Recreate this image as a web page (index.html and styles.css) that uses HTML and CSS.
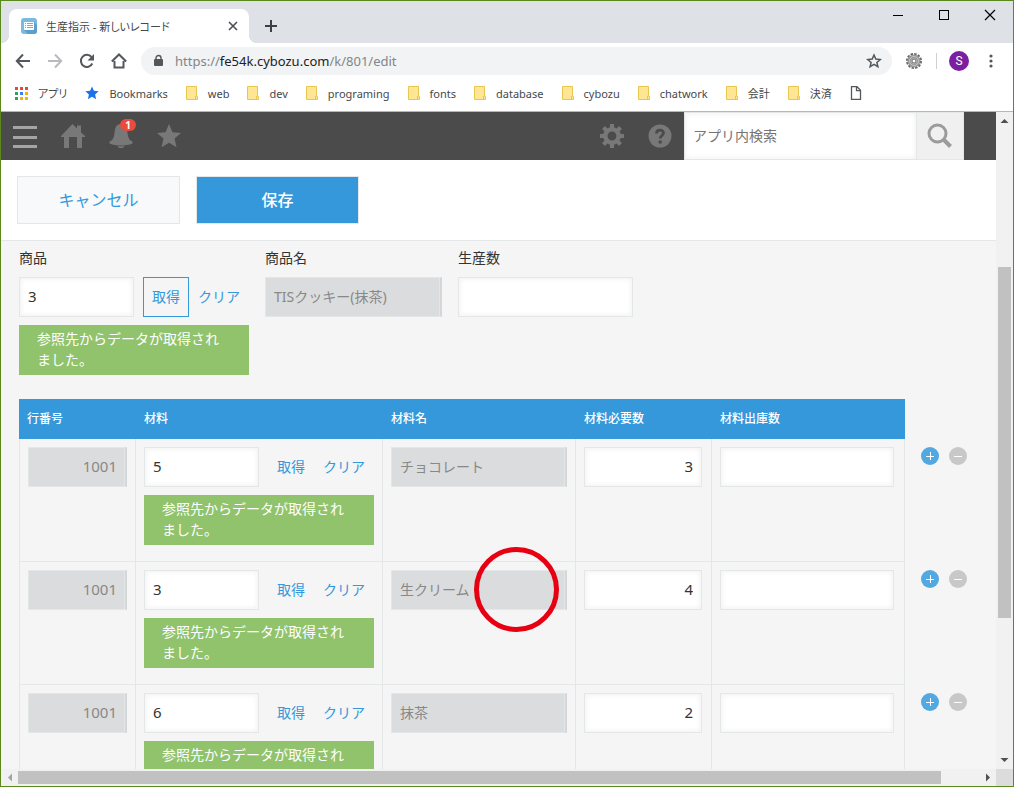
FILE: index.html
```html
<!DOCTYPE html>
<html lang="ja">
<head>
    <meta charset="UTF-8">
    <meta name="viewport" content="width=device-width, initial-scale=1.0">
    <title>生産指示 - 新しいレコード</title>
    <link rel="stylesheet" href="styles.css">
</head>
<body>
    <div class="browser">
        <div class="tab-strip">
            <div class="tab">
                <svg class="favicon" width="16" height="16" viewBox="0 0 16 16">
                    <rect width="16" height="16" rx="3" fill="#7ab9e0"/>
                    <path d="M13 4l3 3v6a3 3 0 0 1-3 3H7l-4-4z" fill="#5c9fcb"/>
                    <rect x="3" y="4" width="10" height="8" rx="1" fill="#fff"/>
                    <path d="M4 5.500h1M6 5.500h6M4 7.500h1M6 7.500h6M4 9.500h1M6 9.500h6" stroke="#6aaeda"/>
                </svg>
                <span class="tab-title">生産指示 - 新しいレコード</span>
                <button class="plain" aria-label="タブを閉じる">
                    <svg width="16" height="16" viewBox="0 0 16 16"><path d="M4 4l8 8M12 4l-8 8" stroke="#4a4d51" stroke-width="1.600"/></svg>
                </button>
            </div>
            <button class="plain new-tab" aria-label="新しいタブ">
                <svg width="16" height="16" viewBox="0 0 16 16"><path d="M8 2v12M2 8h12" stroke="#3c4043" stroke-width="2"/></svg>
            </button>
            <div class="window-buttons">
                <button class="plain" aria-label="最小化"><svg width="12" height="12" viewBox="0 0 12 12"><path d="M1 6.500h10" stroke="#000"/></svg></button>
                <button class="plain" aria-label="最大化"><svg width="12" height="12" viewBox="0 0 12 12"><rect x="1.500" y="1.500" width="9" height="9" fill="none" stroke="#000"/></svg></button>
                <button class="plain" aria-label="閉じる"><svg width="12" height="12" viewBox="0 0 12 12"><path d="M1 1l10 10M11 1L1 11" stroke="#000" stroke-width="1.200"/></svg></button>
            </div>
        </div>

        <div class="toolbar">
            <div class="nav-buttons">
                <button class="plain" aria-label="戻る"><svg width="16" height="16" viewBox="0 0 16 16"><path d="M15 8H2M8 1.500L1.800 8 8 14.500" fill="none" stroke="#54575b" stroke-width="2"/></svg></button>
                <button class="plain" aria-label="進む"><svg width="16" height="16" viewBox="0 0 16 16"><path d="M1 8h13M8 1.500L14.200 8 8 14.500" fill="none" stroke="#b8babd" stroke-width="2"/></svg></button>
                <button class="plain" aria-label="再読み込み"><svg width="16" height="16" viewBox="0 0 16 16"><path d="M13.300 10.500A6 6 0 1 1 12.500 4" fill="none" stroke="#54575b" stroke-width="2"/><path d="M15 1v6.500H8.500z" fill="#54575b"/></svg></button>
                <button class="plain" aria-label="ホーム"><svg width="16" height="16" viewBox="0 0 16 16"><path d="M3.500 8v6.500h9V8M.8 8.500L8 1.500l7.200 7" fill="none" stroke="#54575b" stroke-width="2"/></svg></button>
            </div>
            <div class="omnibox">
                <svg width="12" height="14" viewBox="0 0 12 14"><rect x="1" y="5" width="9" height="7" rx="1" fill="#54575b"/><path d="M3 5.500V4a2.500 2.500 0 0 1 5 0v1.500" fill="none" stroke="#54575b" stroke-width="1.400"/></svg>
                <div class="url" role="textbox" contenteditable="true" aria-label="アドレス">https://<b>fe54k.cybozu.com</b>/k/801/edit</div>
                <button class="plain" aria-label="ブックマークに追加"><svg width="16" height="16" viewBox="0 0 16 16"><path d="M8 2l1.800 4.100 4.400.4-3.300 2.900 1 4.300L8 11.400l-3.900 2.300 1-4.300-3.300-2.900 4.400-.4z" fill="none" stroke="#54575b" stroke-width="1.500"/></svg></button>
            </div>
            <svg class="extension" width="16" height="16" viewBox="0 0 16 16">
                <circle cx="8" cy="8" r="7" fill="none" stroke="#666" stroke-width="2" stroke-dasharray="2.400 1.265"/>
                <circle cx="8" cy="8" r="4.500" fill="none" stroke="#999" stroke-width="4"/>
                <circle cx="8" cy="8" r="4.500" fill="none" stroke="#c4c4c4"/>
                <circle cx="8" cy="8" r="2" fill="#fff" stroke="#666"/>
            </svg>
            <span class="divider"></span>
            <button class="avatar" aria-label="プロフィール">S</button>
            <button class="plain menu" aria-label="メニュー"><svg width="4" height="16" viewBox="0 0 4 16" fill="#54575b"><circle cx="2" cy="3" r="1.600"/><circle cx="2" cy="8" r="1.600"/><circle cx="2" cy="13" r="1.600"/></svg></button>
        </div>

        <nav class="bookmarks">
            <a href="#"><svg width="13" height="13" viewBox="0 0 13 13"><path d="M0 0h3v3H0zM5 0h3v3H5zM10 0h3v3h-3z" fill="#e8453c"/><path d="M0 5h3v3H0zM0 10h3v3H0z" fill="#2fa35a"/><path d="M5 5h3v3H5z" fill="#3f80ef"/><path d="M10 5h3v3h-3zM5 10h3v3H5zM10 10h3v3h-3z" fill="#f3b10b"/></svg>アプリ</a>
            <a href="#"><svg width="14" height="14" viewBox="0 0 14 14"><path d="M7 .5l1.900 4.300 4.700.5-3.500 3.200 1 4.700L7 10.800l-4.100 2.400 1-4.700L.4 5.300l4.700-.5z" fill="#1a73e8"/></svg>Bookmarks</a>
            <a href="#"><svg class="folder"><use href="#folder"/></svg>web</a>
            <a href="#"><svg class="folder"><use href="#folder"/></svg>dev</a>
            <a href="#"><svg class="folder"><use href="#folder"/></svg>programing</a>
            <a href="#"><svg class="folder"><use href="#folder"/></svg>fonts</a>
            <a href="#"><svg class="folder"><use href="#folder"/></svg>database</a>
            <a href="#"><svg class="folder"><use href="#folder"/></svg>cybozu</a>
            <a href="#"><svg class="folder"><use href="#folder"/></svg>chatwork</a>
            <a href="#"><svg class="folder"><use href="#folder"/></svg>会計</a>
            <a href="#"><svg class="folder"><use href="#folder"/></svg>決済</a>
            <a href="#" aria-label="ページ"><svg width="12" height="14" viewBox="0 0 12 14"><path d="M1.500 .7h5.500l3.500 3.500v9.100h-9zM6.500 .7v4h4" fill="none" stroke="#54575b" stroke-width="1.300"/></svg></a>
        </nav>

        <div class="viewport">
            <div class="page">
                <header class="app-header">
                    <div class="header-icons">
                        <button class="plain" aria-label="メニュー"><svg width="24" height="24" viewBox="0 0 24 24"><path d="M0 3.500h24M0 13.500h24M0 22.500h24" stroke="#a5a5a5" stroke-width="3"/></svg></button>
                        <a href="#" aria-label="ポータル"><svg width="24" height="24" viewBox="0 0 24 24"><path d="M0 12L11.500 0 16 4.500V1.500h4v7L24 12v1h-3v11h-5v-11H8v11H3V13H0z" fill="#787878"/></svg></a>
                        <button class="plain bell" aria-label="通知"><svg width="24" height="24" viewBox="0 0 24 24"><path d="M12 0c5 0 6 4 6.500 9 .5 5 2 7.500 5 8.500v2C20 21 16 21.500 12 21.500S4 21 .5 19.500v-2C3.500 16.500 5 14 5.500 9 6 4 7 0 12 0zM8.500 22.200h7Q14 24.500 12 24.500t-3.500-2.300z" fill="#787878"/></svg><span class="badge">1</span></button>
                        <button class="plain" aria-label="ブックマーク"><svg width="24" height="24" viewBox="0 0 24 24"><path d="M12 0l3.500 8.300 8.500.6-6.500 5.700 2 8.700L12 18.800l-7.500 4.500 2-8.700L0 8.900l8.500-.6z" fill="#787878"/></svg></button>
                    </div>
                    <div class="header-icons">
                        <button class="plain" aria-label="設定"><svg width="24" height="24" viewBox="0 0 24 24"><circle cx="12" cy="12" r="6.700" fill="none" stroke="#787878" stroke-width="4.500"/><path d="M12 0v5M12 19v5M0 12h5M19 12h5M3.500 3.500l3.500 3.500M17 17l3.500 3.500M20.500 3.500L17 7M7 17l-3.500 3.500" stroke="#787878" stroke-width="4"/></svg></button>
                        <button class="plain" aria-label="ヘルプ"><svg width="24" height="24" viewBox="0 0 24 24"><circle cx="12" cy="12" r="11.500" fill="#787878"/><path d="M8.500 9.500C8.500 5 15.500 5 15.500 9c0 2.500-3.300 2.500-3.300 5.500" fill="none" stroke="#4b4b4b" stroke-width="2.800"/><circle cx="12.200" cy="18" r="1.800" fill="#4b4b4b"/></svg></button>
                    </div>
                    <form class="search">
                        <input type="text" placeholder="アプリ内検索" aria-label="アプリ内検索">
                        <button type="button" aria-label="検索"><svg width="26" height="26" viewBox="0 0 26 26"><circle cx="10.500" cy="10.500" r="8.500" fill="none" stroke="#9b9b9b" stroke-width="3"/><path d="M16.500 16.500l7 7" stroke="#9b9b9b" stroke-width="4"/></svg></button>
                    </form>
                </header>

                <div class="actions">
                    <button class="btn">キャンセル</button>
                    <button class="btn btn-save">保存</button>
                </div>

                <main class="record">
                    <div class="fields">
                        <div class="field">
                            <label for="product">商品</label>
                            <div class="lookup">
                                <input id="product" class="w-lookup" type="text" value="3">
                                <button class="get focused">取得</button>
                                <button class="clear">クリア</button>
                            </div>
                            <p class="message">参照先からデータが取得されました。</p>
                        </div>
                        <div class="field">
                            <label for="productName">商品名</label>
                            <input id="productName" class="w-name" type="text" value="TISクッキー(抹茶)" disabled>
                        </div>
                        <div class="field">
                            <label for="quantity">生産数</label>
                            <input id="quantity" class="w-out" type="text">
                        </div>
                    </div>

                    <table class="subtable">
                        <thead>
                            <tr>
                                <th>行番号</th>
                                <th>材料</th>
                                <th class="col-name">材料名</th>
                                <th class="col-need">材料必要数</th>
                                <th class="col-out">材料出庫数</th>
                                <td class="ops"></td>
                            </tr>
                        </thead>
                        <tbody>
                            <tr>
                                <td><input class="w-row num" type="text" value="1001" aria-label="行番号" disabled></td>
                                <td>
                                    <div class="lookup">
                                        <input class="w-lookup" type="text" value="5" aria-label="材料">
                                        <button class="get">取得</button>
                                        <button class="clear">クリア</button>
                                    </div>
                                    <p class="message">参照先からデータが取得されました。</p>
                                </td>
                                <td><input class="w-name" type="text" value="チョコレート" aria-label="材料名" disabled></td>
                                <td><input class="w-need num" type="text" value="3" aria-label="材料必要数"></td>
                                <td><input class="w-out num" type="text" aria-label="材料出庫数"></td>
                                <td class="ops"><div><button class="add" aria-label="行を追加"></button><button class="remove" aria-label="行を削除"></button></div></td>
                            </tr>
                            <tr>
                                <td><input class="w-row num" type="text" value="1001" aria-label="行番号" disabled></td>
                                <td>
                                    <div class="lookup">
                                        <input class="w-lookup" type="text" value="3" aria-label="材料">
                                        <button class="get">取得</button>
                                        <button class="clear">クリア</button>
                                    </div>
                                    <p class="message">参照先からデータが取得されました。</p>
                                </td>
                                <td><div class="marked"><input class="w-name" type="text" value="生クリーム" aria-label="材料名" disabled></div></td>
                                <td><input class="w-need num" type="text" value="4" aria-label="材料必要数"></td>
                                <td><input class="w-out num" type="text" aria-label="材料出庫数"></td>
                                <td class="ops"><div><button class="add" aria-label="行を追加"></button><button class="remove" aria-label="行を削除"></button></div></td>
                            </tr>
                            <tr>
                                <td><input class="w-row num" type="text" value="1001" aria-label="行番号" disabled></td>
                                <td>
                                    <div class="lookup">
                                        <input class="w-lookup" type="text" value="6" aria-label="材料">
                                        <button class="get">取得</button>
                                        <button class="clear">クリア</button>
                                    </div>
                                    <p class="message">参照先からデータが取得されました。</p>
                                </td>
                                <td><input class="w-name" type="text" value="抹茶" aria-label="材料名" disabled></td>
                                <td><input class="w-need num" type="text" value="2" aria-label="材料必要数"></td>
                                <td><input class="w-out num" type="text" aria-label="材料出庫数"></td>
                                <td class="ops"><div><button class="add" aria-label="行を追加"></button><button class="remove" aria-label="行を削除"></button></div></td>
                            </tr>
                        </tbody>
                    </table>
                </main>
            </div>

            <div class="scroll-v">
                <svg width="17" height="17" viewBox="0 0 17 17"><path d="M4.500 11h8l-4-4z" fill="#505050"/></svg>
                <div class="track"><div class="thumb"></div></div>
                <svg width="17" height="17" viewBox="0 0 17 17"><path d="M4.500 6h8l-4 4z" fill="#505050"/></svg>
            </div>
            <div class="scroll-h">
                <svg width="17" height="17" viewBox="0 0 17 17"><path d="M11 4.500v8l-4-4z" fill="#a3a3a3"/></svg>
                <div class="track"><div class="thumb"></div></div>
                <svg width="17" height="17" viewBox="0 0 17 17"><path d="M7 4.500v8l4-4z" fill="#505050"/></svg>
            </div>
            <div class="scroll-corner"></div>
        </div>
    </div>

    <svg class="defs">
        <symbol id="folder" viewBox="0 0 12 14">
            <path d="M.5 .5h10v9l1 1v3H.5z" fill="#ffe694" stroke="#e9c64e"/>
            <path d="M9.500 13.500v-3.500h1.500" fill="none" stroke="#e9c64e"/>
        </symbol>
    </svg>
</body>
</html>
```
FILE: styles.css
```css
*, *::before, *::after {
    box-sizing: border-box;
}
body {
    margin: 0;
    font-family: 'Noto Sans', 'Noto Sans CJK JP', sans-serif;
    font-size: 14px;
    color: #333;
}
button, input {
    font-family: inherit;
    font-size: 14px;
    margin: 0;
}
button {
    cursor: pointer;
}
svg {
    display: block;
    flex-shrink: 0;
}
a {
    color: inherit;
    text-decoration: none;
}
.plain {
    display: block;
    padding: 0;
    border: none;
    background: none;
}
.defs {
    position: absolute;
    width: 0;
    height: 0;
}

/* browser window */
.browser {
    display: flex;
    flex-direction: column;
    height: 100vh;
    border: 1px solid #5a8a1c;
    background-color: #fff;
}
.tab-strip {
    display: flex;
    height: 42px;
    padding: 8px 17px 0 8px;
    background-color: #dee1e6;
}
.tab {
    position: relative;
    display: flex;
    align-items: center;
    width: 240px;
    padding: 0 8px 0 12px;
    border-radius: 8px 8px 0 0;
    background-color: #fff;
}
.tab::before, .tab::after {
    content: '';
    position: absolute;
    bottom: 0;
    width: 8px;
    height: 8px;
}
.tab::before {
    left: -8px;
    background: radial-gradient(circle at 0 0, #dee1e6 8px, #fff 8px);
}
.tab::after {
    right: -8px;
    background: radial-gradient(circle at 100% 0, #dee1e6 8px, #fff 8px);
}
.tab-title {
    flex: 1;
    margin-left: 9px;
    font-size: 11px;
    font-feature-settings: 'palt';
    white-space: nowrap;
    color: #45494d;
}
.new-tab {
    margin-left: 14px;
}
.window-buttons {
    display: flex;
    gap: 34px;
    height: 12px;
    margin-left: auto;
}
.toolbar {
    display: flex;
    align-items: center;
    height: 36px;
    padding: 0 20px 0 14px;
}
.nav-buttons {
    display: flex;
    gap: 16px;
}
.omnibox {
    display: flex;
    flex: 1;
    align-items: center;
    height: 28px;
    margin-left: 14px;
    padding: 0 10px 0 12px;
    border-radius: 14px;
    background-color: #f1f3f4;
}
.url {
    flex: 1;
    margin-left: 10px;
    font-size: 13px;
    color: #80868b;
    outline: none;
}
.url b {
    font-weight: normal;
    color: #202124;
}
.extension {
    margin-left: 14px;
}
.divider {
    width: 1px;
    height: 16px;
    margin: 0 12px 0 14px;
    background-color: #cfd1d4;
}
.avatar {
    width: 20px;
    height: 20px;
    padding: 0;
    border: none;
    border-radius: 50%;
    background-color: #7b1fa2;
    font-family: Roboto, sans-serif;
    font-size: 12px;
    line-height: 20px;
    color: #fff;
}
.menu {
    margin-left: 20px;
}
.bookmarks {
    display: flex;
    align-items: center;
    gap: 18px;
    height: 32px;
    padding: 0 14px 4px;
    font-size: 11px;
    font-feature-settings: 'palt';
    color: #45494d;
}
.bookmarks a {
    display: flex;
    align-items: center;
    gap: 10px;
    white-space: nowrap;
}
.folder {
    width: 12px;
    height: 14px;
}

/* page area with scrollbars */
.viewport {
    display: grid;
    grid-template-columns: 1fr 17px;
    grid-template-rows: 1fr 17px;
    flex: 1;
    min-height: 0;
    border-top: 1px solid #b6b8b6;
}
.page {
    min-width: 0;
    min-height: 0;
    overflow: hidden;
    background-color: #f5f5f5;
}
.scroll-v, .scroll-h {
    display: flex;
    background-color: #f1f1f1;
}
.scroll-v {
    flex-direction: column;
}
.track {
    flex: 1;
}
.thumb {
    background-color: #c1c1c1;
}
.scroll-v .track {
    display: grid;
    grid-template-rows: 138fr 351fr 134fr;
    padding: 0 2px;
}
.scroll-v .thumb {
    grid-row: 2;
}
.scroll-h .track {
    display: grid;
    grid-template-columns: 96fr 4fr;
    padding: 2px 0;
}
.scroll-corner {
    background-color: #dcdcdc;
}

/* header */
.app-header {
    display: flex;
    align-items: center;
    height: 48px;
    padding: 0 32px 0 12px;
    background-color: #4b4b4b;
}
.header-icons {
    display: flex;
    gap: 24px;
    align-items: center;
}
.header-icons:first-child {
    margin-right: auto;
}
.bell {
    position: relative;
}
.badge {
    position: absolute;
    top: -5px;
    right: -3px;
    width: 16px;
    height: 12px;
    border-radius: 6px;
    background-color: #e74c3c;
    font-size: 10px;
    font-weight: bold;
    line-height: 12px;
    text-align: center;
    color: #fff;
}
.search {
    display: flex;
    height: 48px;
    margin-left: 12px;
}
.search input {
    width: 233px;
    height: 48px;
    padding: 0 8px 2px;
}
.search input::placeholder {
    color: #757575;
    opacity: 1;
}
.search button {
    display: flex;
    align-items: center;
    justify-content: center;
    width: 47px;
    padding: 0;
    border: 1px solid #e3e7e8;
    border-left: none;
    background-color: #f0f0f0;
}
.actions {
    display: flex;
    gap: 16px;
    padding: 16px;
    border-bottom: 1px solid #e3e7e8;
    background-color: #fff;
}
.btn {
    width: 163px;
    height: 48px;
    padding: 0 0 2px;
    border: 1px solid #e3e7e8;
    background-color: #f7f9fa;
    font-size: 16px;
    color: #3498db;
}
.btn-save {
    background-color: #3498db;
    font-weight: 500;
    color: #fff;
}

/* record form */
.record {
    padding: 8px 18px;
}
.fields {
    display: flex;
    gap: 16px;
    margin-bottom: 24px;
}
.field label {
    display: block;
    margin-bottom: 10px;
    line-height: 18px;
}
input {
    display: block;
    height: 40px;
    padding: 0 8px 2px;
    border: 1px solid #e3e7e8;
    border-radius: 0;
    background-color: #fff;
    box-shadow: inset 2px 2px 4px #f5f5f5, inset -2px -2px 4px #f5f5f5;
    color: #333;
}
input:disabled {
    border-right: 2px solid #d4d7d7;
    background-color: #dbdcdd;
    box-shadow: inset -1px 0 #e3e7e8;
    color: #888;
}
.num {
    text-align: right;
    font-size: 15px;
}
.w-row {
    width: 99px;
}
.w-lookup {
    width: 115px;
    font-size: 15px;
}
.w-name {
    width: 177px;
}
.w-need {
    width: 118px;
}
.w-out {
    width: 175px;
}
.lookup {
    display: flex;
    width: 230px;
}
.get, .clear {
    height: 40px;
    padding: 0 8px 2px;
    border: 1px solid transparent;
    background: none;
    white-space: nowrap;
    color: #3498db;
}
.get {
    margin-left: 9px;
}
.clear {
    padding-right: 0;
}
.focused {
    border-color: #3498db;
}
.message {
    width: 230px;
    margin: 8px 0 0;
    padding: 3px 18px 5px;
    background-color: #91c36c;
    line-height: 21px;
    color: #fff;
}

/* subtable */
.subtable {
    border-spacing: 0;
}
.subtable th {
    height: 40px;
    padding: 0 8px 2px;
    background-color: #3498db;
    font-size: 12px;
    font-weight: 500;
    text-align: left;
    color: #fff;
}
.subtable tbody td {
    padding: 8px 8px 16px;
    border-right: 1px solid #e3e7e8;
    border-bottom: 1px solid #e3e7e8;
    vertical-align: top;
}
.subtable tbody td:first-child {
    border-left: 1px solid #e3e7e8;
}
.subtable .w-name {
    width: 176px;
}
.subtable .w-out {
    width: 174px;
}
.col-name, .col-out {
    width: 193px;
}
.col-need {
    width: 136px;
}
.subtable tbody .ops {
    padding: 8px 0 0 16px;
    border: none;
}
.ops div {
    display: flex;
    gap: 10px;
}
.add, .remove {
    width: 18px;
    height: 18px;
    padding: 0;
    border: none;
    border-radius: 50%;
}
.add {
    background: linear-gradient(#fff, #fff) center / 8px 1px no-repeat, linear-gradient(#fff, #fff) center / 1px 8px no-repeat, #52a8e1;
}
.remove {
    background: linear-gradient(#fff, #fff) center / 8px 1px no-repeat, #c8c8c8;
}

/* red ring over the field */
.marked {
    position: relative;
}
.marked::after {
    content: '';
    position: absolute;
    top: -23px;
    left: 83px;
    width: 85px;
    height: 85px;
    border: 5px solid #e60012;
    border-radius: 50%;
}
```
